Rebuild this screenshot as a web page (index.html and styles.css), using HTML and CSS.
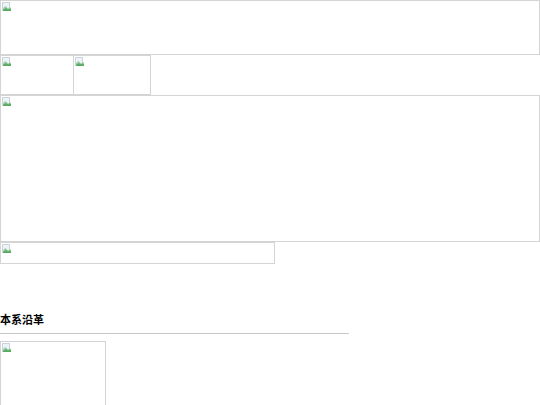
FILE: index.html
```html
<!DOCTYPE html>
<html lang="zh">
<head>
<meta charset="utf-8">
<title>本系沿革</title>
<link rel="stylesheet" href="styles.css">
</head>
<body>
<div class="ph banner"><svg class="ico" viewBox="0 0 10 10"><rect x="0.5" y="0.5" width="7" height="8" fill="#eef3f8" stroke="#c9d4de"/><path d="M1 6 L3.5 4 L6 6.5 L8 5 L9 6 L9 9 L1 9 Z" fill="#9fcfa8"/><path d="M1 8 L4 6 L6 7.5 L8 6.5 L9 7.5 L9 9 L1 9 Z" fill="#5aab62"/></svg></div>
<div class="row">
  <div class="ph navA"><svg class="ico" viewBox="0 0 10 10"><rect x="0.5" y="0.5" width="7" height="8" fill="#eef3f8" stroke="#c9d4de"/><path d="M1 6 L3.5 4 L6 6.5 L8 5 L9 6 L9 9 L1 9 Z" fill="#9fcfa8"/><path d="M1 8 L4 6 L6 7.5 L8 6.5 L9 7.5 L9 9 L1 9 Z" fill="#5aab62"/></svg></div>
  <div class="ph navB"><svg class="ico" viewBox="0 0 10 10"><rect x="0.5" y="0.5" width="7" height="8" fill="#eef3f8" stroke="#c9d4de"/><path d="M1 6 L3.5 4 L6 6.5 L8 5 L9 6 L9 9 L1 9 Z" fill="#9fcfa8"/><path d="M1 8 L4 6 L6 7.5 L8 6.5 L9 7.5 L9 9 L1 9 Z" fill="#5aab62"/></svg></div>
</div>
<div class="ph hero"><svg class="ico" viewBox="0 0 10 10"><rect x="0.5" y="0.5" width="7" height="8" fill="#eef3f8" stroke="#c9d4de"/><path d="M1 6 L3.5 4 L6 6.5 L8 5 L9 6 L9 9 L1 9 Z" fill="#9fcfa8"/><path d="M1 8 L4 6 L6 7.5 L8 6.5 L9 7.5 L9 9 L1 9 Z" fill="#5aab62"/></svg></div>
<div class="ph strip"><svg class="ico" viewBox="0 0 10 10"><rect x="0.5" y="0.5" width="7" height="8" fill="#eef3f8" stroke="#c9d4de"/><path d="M1 6 L3.5 4 L6 6.5 L8 5 L9 6 L9 9 L1 9 Z" fill="#9fcfa8"/><path d="M1 8 L4 6 L6 7.5 L8 6.5 L9 7.5 L9 9 L1 9 Z" fill="#5aab62"/></svg></div>
<h2 class="title">本系沿革</h2>
<div class="rule"></div>
<div class="ph photo"><svg class="ico" viewBox="0 0 10 10"><rect x="0.5" y="0.5" width="7" height="8" fill="#eef3f8" stroke="#c9d4de"/><path d="M1 6 L3.5 4 L6 6.5 L8 5 L9 6 L9 9 L1 9 Z" fill="#9fcfa8"/><path d="M1 8 L4 6 L6 7.5 L8 6.5 L9 7.5 L9 9 L1 9 Z" fill="#5aab62"/></svg></div>
</body>
</html>
```

FILE: styles.css
```css
html, body {
  margin: 0;
  padding: 0;
  background: #fff;
}
body {
  font-family: "Noto Sans CJK SC", "Liberation Sans", sans-serif;
  color: #000;
}
.ph {
  box-sizing: border-box;
  border: 1px solid #d4d4d4;
  position: relative;
  background: #fff;
}
.ico {
  position: absolute;
  left: 1px;
  top: 1px;
  width: 10px;
  height: 10px;
}
.banner {
  width: 540px;
  height: 55px;
}
.row {
  display: flex;
}
.navA {
  width: 74px;
  height: 40px;
}
.navB {
  width: 78px;
  height: 40px;
  margin-left: -1px;
}
.hero {
  width: 540px;
  height: 147px;
}
.strip {
  width: 275px;
  height: 22px;
}
.title {
  margin: 47px 0 0 0;
  font-size: 11px;
  line-height: 16px;
  font-weight: 600;
}
.rule {
  width: 349px;
  height: 1px;
  background: #c8c8c8;
  margin-top: 6px;
}
.photo {
  width: 106px;
  height: 80px;
  margin-top: 7px;
}
```
